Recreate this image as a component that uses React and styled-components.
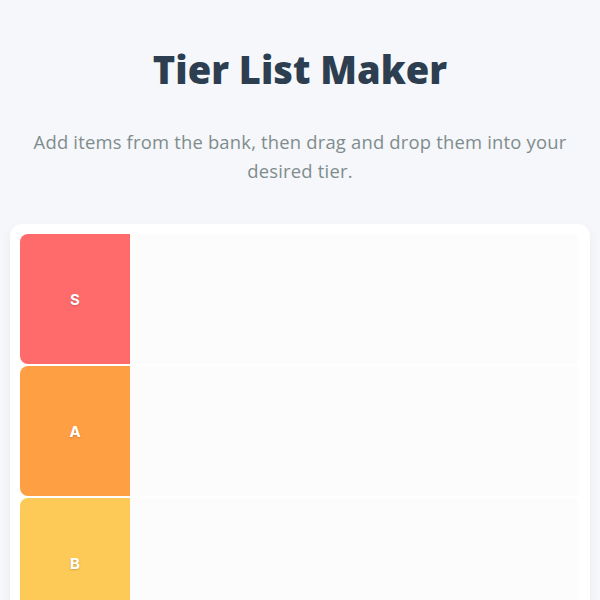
import React from "react";
import styled, { createGlobalStyle } from "styled-components";

const tiers = [
  { name: "S", color: "#ff6b6b" },
  { name: "A", color: "#ff9f43" },
  { name: "B", color: "#feca57" },
  { name: "C", color: "#1dd1a1" },
  { name: "D", color: "#54a0ff" },
];

const GlobalStyle = createGlobalStyle`
  * {
    box-sizing: border-box;
  }

  body {
    margin: 0;
    background-color: #f5f7fa;
    font-family: "Open Sans", "Liberation Sans", sans-serif;
  }
`;

const App = () => {
  return (
    <>
      <GlobalStyle />
      <Page>
        <Title>Tier List Maker</Title>
        <Subtitle>
          Add items from the bank, then drag and drop them into your desired
          tier.
        </Subtitle>
        <Board>
          {tiers.map((tier) => (
            <TierRow key={tier.name}>
              <TierLabel $color={tier.color}>{tier.name}</TierLabel>
              <DropZone />
            </TierRow>
          ))}
        </Board>
      </Page>
    </>
  );
};

const Page = styled.div`
  display: flex;
  flex-direction: column;
  align-items: center;
  padding: 46px 10px 20px;
`;

const Title = styled.h1`
  margin: 0 0 35px;
  font-size: 38px;
  line-height: 46px;
  font-weight: 800;
  color: #2c3e50;
  text-align: center;
`;

const Subtitle = styled.p`
  max-width: 550px;
  margin: 0 0 39px;
  font-size: 18.4px;
  line-height: 29px;
  font-weight: 400;
  letter-spacing: 0.2px;
  color: #7f8c8d;
  text-align: center;
`;

const Board = styled.div`
  display: flex;
  flex-direction: column;
  gap: 2px;
  width: 100%;
  padding: 10px 12px 10px 10px;
  background-color: #fff;
  border-radius: 12px;
  box-shadow: 0 4px 12px rgba(0, 0, 0, 0.05);
`;

const TierRow = styled.div`
  display: flex;
  min-height: 130px;
`;

const TierLabel = styled.div`
  display: flex;
  justify-content: center;
  align-items: center;
  flex: 0 0 110px;
  background-color: ${(p) => p.$color};
  border-radius: 8px 0 0 8px;
  color: #fff;
  font-family: Inter, "Open Sans", sans-serif;
  font-size: 15px;
  font-weight: 700;
  text-shadow: 0 1px 2px rgba(0, 0, 0, 0.2);
`;

const DropZone = styled.div`
  flex: 1;
  background-color: #fcfcfc;
`;

export default App;
